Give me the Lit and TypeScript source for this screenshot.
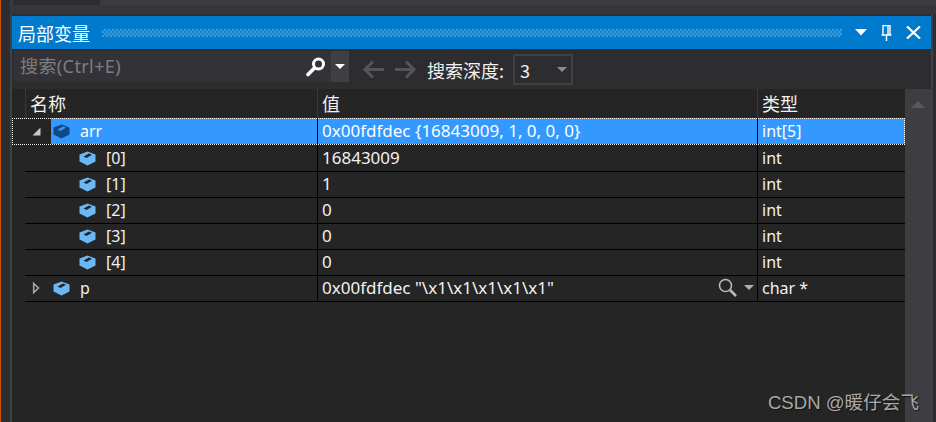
import { LitElement, html, css } from "lit";
import { customElement } from "lit/decorators.js";

const cube = (dark = false) => html`<svg class="cube ${dark ? "dark" : ""}" width="17" height="15" viewBox="0 0 17 15">
  <path class="solid" d="M8.5 0.5 16.5 3.5V10.5L8.5 14.5 0.5 10.5V3.5Z"/>
  <path class="hole" d="M4.5 5.5 10 2.5 13 3.8 7.5 7Z"/>
</svg>`;

const caret = (cls: string) => html`<svg class="${cls}" width="10" height="5" viewBox="0 0 10 5"><path d="M0 0H10L5 5Z"/></svg>`;

const rows = [
  { name: "[0]", value: "16843009", type: "int" },
  { name: "[1]", value: "1", type: "int" },
  { name: "[2]", value: "0", type: "int" },
  { name: "[3]", value: "0", type: "int" },
  { name: "[4]", value: "0", type: "int" },
];

@customElement("app-root")
export class AppRoot extends LitElement {
  static styles = css`
    :host {
      display: block;
      width: 936px;
      height: 422px;
      overflow: hidden;
      background: #2d2d30;
      font-family: "Noto Sans CJK SC", "Liberation Sans", sans-serif;
      color: #f1f1f1;
      position: relative;
    }
    .frame { display: flex; height: 422px; border-left: 1px solid #ca5100; }
    .gutter { width: 9px; flex: none; }
    .right { flex: 1; display: flex; flex-direction: column; min-width: 0; }
    .strip-a { height: 5px; flex: none; background: #3c3c40; padding-left: 3px; }
    .strip-box { width: 87px; height: 5px; background: #2d2d30; }
    .strip-b { height: 9px; flex: none; background: #37373b; }
    .panel {
      flex: 1; width: 923px; min-height: 0; box-sizing: border-box; display: flex; flex-direction: column;
      border: solid #3f3f46; border-width: 0 2px; padding-top: 2px;
    }
    .title {
      flex: none; height: 33px; background: #007acc; display: flex; align-items: center;
      padding: 0 10px 0 6px; font-size: 18px; color: #fff;
    }
    .grip {
      flex: 1; height: 8px; margin: 0 13px 0 12px;
      background: repeating-conic-gradient(#3d9ad8 0 25%, #0f82cf 0 50%) 0 0 / 4px 4px;
    }
    .tools { display: flex; align-items: center; gap: 14px; }
    .bar { flex: none; height: 40px; display: flex; align-items: flex-start; padding-left: 2px; }
    .search {
      width: 335px; height: 31px; margin-top: 2px; background: #333337; display: flex; align-items: center;
      color: #7d7d80; font-size: 18px; box-sizing: border-box; padding-left: 6px;
    }
    .txt { flex: 1; line-height: 31px; letter-spacing: 0.4px; font-family: "Noto Sans", "Noto Sans CJK SC", sans-serif; }
    .glass { margin-right: 5px; }
    .sbtn { width: 18px; height: 31px; background: #3f3f46; display: flex; align-items: center; justify-content: center; flex: none; }
    .white path { fill: #fff; }
    .gray path { fill: #8a8a8d; }
    .silver path { fill: #b0b0b0; }
    .nav { display: flex; gap: 11px; margin: 11px 0 0 13px; }
    .depth { margin: 6px 0 0 10px; font-size: 18px; line-height: 30px; color: #f1f1f1; }
    .combo {
      margin: 5px 0 0 9px; width: 60px; height: 31px; box-sizing: border-box; border: 2px solid #3f3f46;
      display: flex; align-items: center; justify-content: space-between; padding: 0 4px 0 5px; font-size: 18px;
    }
    .content { flex: 1; display: flex; min-height: 0; background: #252526; }
    .grid { width: 893px; flex: none; }
    .scroll {
      flex: 1; background: #3e3e42; display: flex; justify-content: center; padding-top: 12px; box-sizing: border-box;
    }
    .scroll svg { display: block; }
    .head { display: grid; grid-template-columns: 13px 292px 440px 148px; height: 29px; font-size: 18px; }
    .head .h { border-left: 1px solid #3a3a3d; padding-left: 4px; line-height: 29px; box-sizing: border-box; height: 29px; }
    .row {
      display: grid; grid-template-columns: 13px 292px 440px 148px; height: 26px; line-height: 26px; font-size: 16px;
      box-sizing: border-box; font-family: "Noto Sans", "Noto Sans CJK SC", sans-serif;
    }
    .row > div { box-sizing: border-box; position: relative; white-space: nowrap; }
    .c1 { display: flex; align-items: center; border-bottom: 1px solid #000; }
    .c2, .c3 { border-left: 1px solid #000; border-bottom: 1px solid #000; }
    .c2 { padding-left: 4px; font-size: 17px; }
    .c3 { padding-left: 4px; }
    .sel { height: 27px; line-height: 26px; position: relative; }
    .sel::after {
      content: ""; position: absolute; inset: 0; border: 1px dotted #fff; pointer-events: none;
    }
    .sel .c2, .sel .c3 { background: #3399ff; color: #fff; }
    .sel .c1 { background: linear-gradient(to right, #252526 26px, #3399ff 26px); color: #fff; }
    .cube { flex: none; display: block; }
    .solid { fill: #6cb8f5; }
    .hole { fill: #252526; }
    .cube.dark .solid { fill: #0f4a85; }
    .cube.dark .hole { fill: #3399ff; }
    .name { margin-left: 10px; }
    .lead-root { width: 7px; flex: none; }
    .lead-child { width: 54px; flex: none; }
    .tw { width: 11px; margin-right: 10px; flex: none; display: flex; justify-content: flex-start; }
    .tw svg { display: block; }
    .mag { position: absolute; right: 3px; top: 3px; display: flex; align-items: center; gap: 6px; }
    .mag svg:first-child { margin-right: 1px; }
    .wm {
      position: absolute; right: 17px; top: 390px; font-family: "Liberation Sans", "Noto Sans CJK SC", sans-serif;
      font-size: 18.6px; color: #a8a8a8; text-shadow: 1px 1px 1px #111; line-height: 26px;
    }
  `;

  render() {
    return html`
      <div class="frame">
        <div class="gutter"></div>
        <div class="right">
          <div class="strip-a"><div class="strip-box"></div></div>
          <div class="strip-b"></div>
          <div class="panel">
            <div class="title">
              <span>局部变量</span>
              <div class="grip"></div>
              <div class="tools">
                <svg width="12" height="7" viewBox="0 0 12 7"><path d="M0 0H12L6 6.5Z" fill="#fff"/></svg>
                <svg width="11" height="16" viewBox="0 0 11 16"><path d="M2 .5H9V10H2ZM.5 10H10.5M5.5 10V16M7 1V10" fill="none" stroke="#fff" stroke-width="1.4"/></svg>
                <svg width="15" height="13" viewBox="0 0 15 13"><path d="M1 .5 14 12.5M14 .5 1 12.5" stroke="#fff" stroke-width="2.2" fill="none"/></svg>
              </div>
            </div>
            <div class="bar">
              <div class="search">
                <span class="txt">搜索(Ctrl+E)</span>
                <svg class="glass" width="20" height="20" viewBox="0 0 20 20"><circle cx="12.5" cy="7" r="5" fill="none" stroke="#fff" stroke-width="3"/><path d="M8.5 11 2 17.5" stroke="#fff" stroke-width="3.6" stroke-linecap="round"/></svg>
                <div class="sbtn">${caret("white")}</div>
              </div>
              <div class="nav">
                <svg width="22" height="19" viewBox="0 0 22 19"><path d="M22 9.5H3M11 1.5 3 9.5 11 17.5" fill="none" stroke="#555558" stroke-width="3"/></svg>
                <svg width="22" height="19" viewBox="0 0 22 19"><path d="M0 9.5H19M11 1.5 19 9.5 11 17.5" fill="none" stroke="#555558" stroke-width="3"/></svg>
              </div>
              <span class="depth">搜索深度:</span>
              <div class="combo"><span>3</span>${caret("gray")}</div>
            </div>
            <div class="content">
              <div class="grid">
                <div class="head"><div></div><div class="h">名称</div><div class="h">值</div><div class="h">类型</div></div>
                <div class="row sel">
                  <div></div>
                  <div class="c1"><span class="lead-root"></span><span class="tw"><svg width="9" height="9" viewBox="0 0 9 9"><path d="M8.5 .5V8.5H.5Z" fill="#c8c8c8"/></svg></span>${cube(true)}<span class="name">arr</span></div>
                  <div class="c2">0x00fdfdec {16843009, 1, 0, 0, 0}</div>
                  <div class="c3">int[5]</div>
                </div>
                ${rows.map(r => html`<div class="row">
                  <div></div>
                  <div class="c1"><span class="lead-child"></span>${cube()}<span class="name">${r.name}</span></div>
                  <div class="c2">${r.value}</div>
                  <div class="c3">${r.type}</div>
                </div>`)}
                <div class="row">
                  <div></div>
                  <div class="c1"><span class="lead-root"></span><span class="tw"><svg width="8" height="12" viewBox="0 0 8 12"><path d="M1.7 1.5 6.5 6 1.7 10.5Z" fill="none" stroke="#a8a8a8" stroke-width="1.6"/></svg></span>${cube()}<span class="name">p</span></div>
                  <div class="c2">0x00fdfdec "\\x1\\x1\\x1\\x1\\x1"
                    <span class="mag"><svg width="19" height="19" viewBox="0 0 19 19"><circle cx="7.5" cy="7.5" r="6" fill="none" stroke="#b8b8b8" stroke-width="1.6"/><path d="M12 12 18 18" stroke="#b8b8b8" stroke-width="2.6"/></svg>${caret("silver")}</span>
                  </div>
                  <div class="c3">char *</div>
                </div>
              </div>
              <div class="scroll"><svg width="14" height="7" viewBox="0 0 14 7"><path d="M0 7 7 0 14 7Z" fill="#5a5a5e"/></svg></div>
            </div>
          </div>
        </div>
      </div>
      <div class="wm">CSDN @暖仔会飞</div>
    `;
  }
}
